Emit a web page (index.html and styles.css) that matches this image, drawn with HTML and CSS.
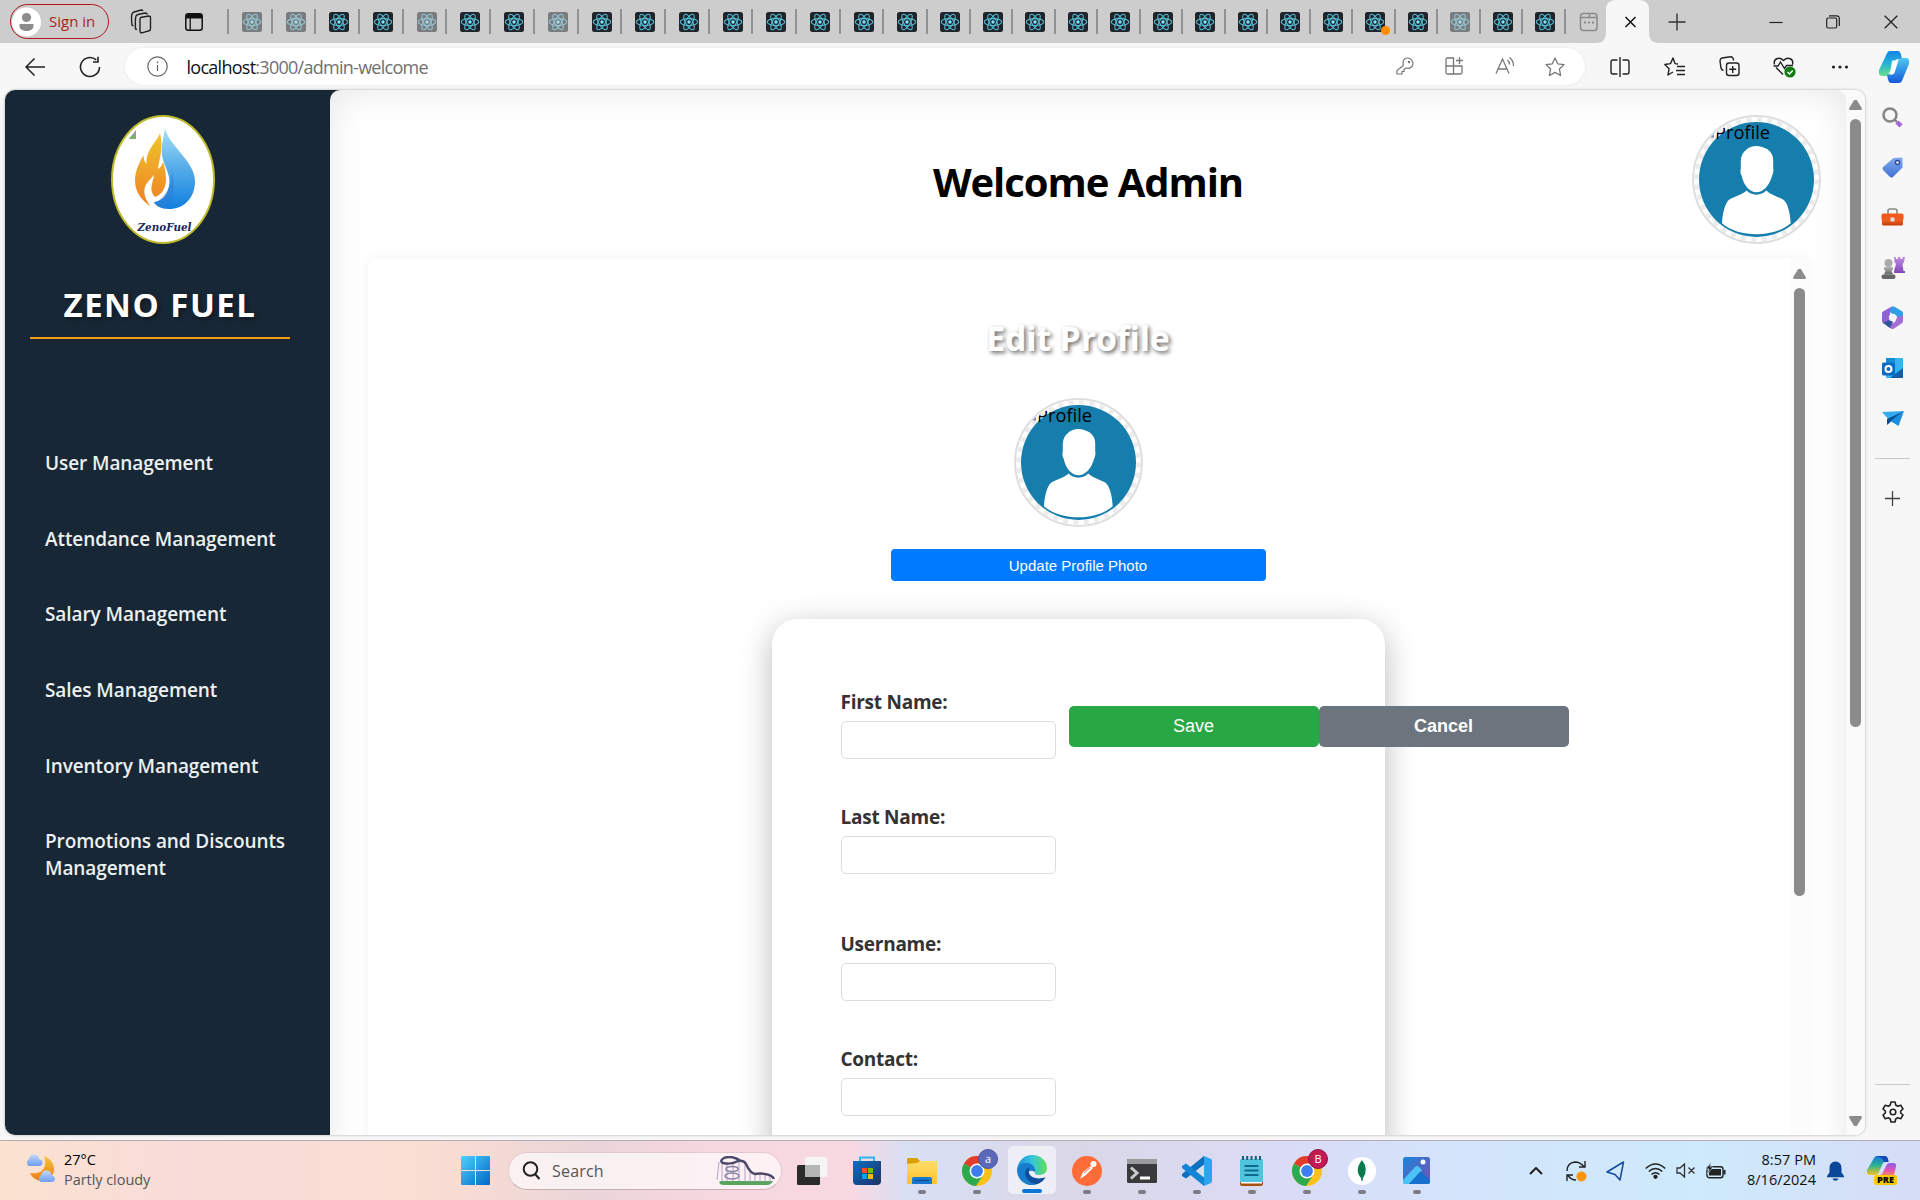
FILE: index.html
```html
<!DOCTYPE html>
<html lang="en">
<head>
<meta charset="utf-8">
<title>Admin</title>
<link rel="stylesheet" href="styles.css">
</head>
<body>
<svg class="defs" width="0" height="0">
  <defs>
    <linearGradient id="gBlue" x1="0" y1="0" x2="0" y2="1"><stop offset="0" stop-color="#a5e0f8"/><stop offset=".5" stop-color="#55abe9"/><stop offset="1" stop-color="#117fe0"/></linearGradient>
    <linearGradient id="gFlame" x1="0" y1="0" x2="0" y2="1"><stop offset="0" stop-color="#eec52b"/><stop offset="1" stop-color="#f08125"/></linearGradient>
    <linearGradient id="gWin" x1="0" y1="0" x2="1" y2="1"><stop offset="0" stop-color="#4fd0fb"/><stop offset="1" stop-color="#0067c8"/></linearGradient>
    <linearGradient id="gCop1" x1="0" y1="0" x2="0" y2="1"><stop offset="0" stop-color="#1782e8"/><stop offset=".5" stop-color="#22b4d4"/><stop offset="1" stop-color="#6bdc8b"/></linearGradient>
    <linearGradient id="gCop2" x1="0" y1="0" x2="0" y2="1"><stop offset="0" stop-color="#4cc9f5"/><stop offset="1" stop-color="#1559d8"/></linearGradient>
    <linearGradient id="gPre1" x1="0" y1="0" x2="0" y2="1"><stop offset="0" stop-color="#1578e0"/><stop offset=".5" stop-color="#2cb38f"/><stop offset="1" stop-color="#fbc21a"/></linearGradient>
    <linearGradient id="gPre2" x1="0" y1="0" x2="0" y2="1"><stop offset="0" stop-color="#8f5df0"/><stop offset=".6" stop-color="#e154b8"/><stop offset="1" stop-color="#f8845a"/></linearGradient>
    <linearGradient id="gPurple" x1="0" y1="0" x2="0" y2="1"><stop offset="0" stop-color="#c08be8"/><stop offset="1" stop-color="#8248b8"/></linearGradient>
    <linearGradient id="gGray" x1="0" y1="0" x2="0" y2="1"><stop offset="0" stop-color="#b4b4b4"/><stop offset="1" stop-color="#666"/></linearGradient>
    <linearGradient id="gTag" x1="0" y1="0" x2="0" y2="1"><stop offset="0" stop-color="#7fabf0"/><stop offset="1" stop-color="#4470d4"/></linearGradient>
    <linearGradient id="gRed" x1="0" y1="0" x2="0" y2="1"><stop offset="0" stop-color="#f26522"/><stop offset="1" stop-color="#c93c08"/></linearGradient>
    <linearGradient id="gFold" x1="0" y1="0" x2="0" y2="1"><stop offset="0" stop-color="#ffdc6b"/><stop offset="1" stop-color="#fdc22c"/></linearGradient>
    <linearGradient id="gStore" x1="0" y1="0" x2="1" y2="1"><stop offset="0" stop-color="#0a6fc0"/><stop offset="1" stop-color="#1f2f62"/></linearGradient>
    <linearGradient id="gEdge" x1="0" y1="0" x2="1" y2="0"><stop offset="0" stop-color="#1c8fd8"/><stop offset=".5" stop-color="#33c4e0"/><stop offset="1" stop-color="#62df55"/></linearGradient>
    <linearGradient id="gMoon" x1="0" y1="0" x2="0" y2="1"><stop offset="0" stop-color="#f6c63c"/><stop offset="1" stop-color="#ee7a14"/></linearGradient>
    <linearGradient id="gCloud" x1="0" y1="0" x2="0" y2="1"><stop offset="0" stop-color="#c0d8fc"/><stop offset="1" stop-color="#6f9df0"/></linearGradient>
    <linearGradient id="gPhoto" x1="0" y1="0" x2="1" y2="1"><stop offset="0" stop-color="#1a86dc"/><stop offset="1" stop-color="#7a4fb0"/></linearGradient>
    <clipPath id="faceClip"><circle cx="65" cy="64.500" r="61.500"/></clipPath>
  </defs>
  <symbol id="atom" viewBox="0 0 20 20">
    <rect width="20" height="20" rx="2.500" fill="#20232a"/>
    <g fill="none" stroke="#56bfd9" stroke-width="1.050"><ellipse cx="10" cy="10" rx="8.800" ry="3.400"/><ellipse cx="10" cy="10" rx="8.800" ry="3.400" transform="rotate(60 10 10)"/><ellipse cx="10" cy="10" rx="8.800" ry="3.400" transform="rotate(120 10 10)"/></g>
    <circle cx="10" cy="10" r="1.700" fill="#7be6ff"/>
  </symbol>
  <symbol id="face" viewBox="0 0 129 129">
    <circle cx="64.500" cy="64.500" r="63.400" fill="#fff" stroke="#dedede" stroke-width="2"/>
    <circle cx="64.500" cy="64.500" r="60" fill="none" stroke="#ebebeb" stroke-width="4.500" stroke-dasharray="5 5.470"/>
    <circle cx="64.500" cy="64.500" r="57.500" fill="#167eac"/>
    <path fill="#fff" d="M64.500 31c7 .3 16.700 4 16.700 14V53c.5 2 .3 5-1.200 8C77.500 71 70.500 77.300 64.500 77.300S51.500 71 49.800 61c-1.500-2-1.700-5-1-7.500V46C49 37 56.500 31 64.500 31z"/>
    <path fill="#fff" d="M54.700 75.500c4 5.500 15.500 5.500 19.500 0 5 4.500 11.500 6 17 9 5 3.500 7 15 7.500 23.800C89.500 116 77.500 119.300 64.500 119.300S39 116 30 108.300C30.500 99 32.500 89 37 84.700c5.500-3.200 13-5 17.700-9.200z"/>
    <path d="M18.500 22.500l3.500-3.500v3.500z" fill="#888"/>
  </symbol>
  <symbol id="chrome" viewBox="0 0 30 30">
    <circle cx="15" cy="15" r="15" fill="#fbc116"/>
    <path d="M15 15L2 7.500A15 15 0 0 1 28 7.500H15z" fill="#e33b2e"/>
    <path d="M15 15L2 7.500A15 15 0 0 0 14 30l7.500-11.500z" fill="#2da94f"/>
    <circle cx="15" cy="15" r="7.500" fill="#fff"/><circle cx="15" cy="15" r="5.900" fill="#3e7eee"/>
  </symbol>
</svg>

<div class="screen">
  <header class="tabstrip">
    <div class="signin">
      <svg width="29" height="30" viewBox="0 0 29 30"><circle cx="14.500" cy="15" r="14.500" fill="#fff"/><circle cx="14.500" cy="10.500" r="4.600" fill="#8c8c8c"/><path d="M7.500 17h14c.500 5-2.500 7-7 7s-7.500-2-7-7z" fill="#8c8c8c"/></svg>
      <span class="signin-text">Sign in</span>
    </div>
    <svg class="ico-work" width="22" height="25" viewBox="0 0 22 25" fill="none" stroke="#222" stroke-width="1.400"><path d="M10.500 8.500l8-1.500q2 0 2 1.500v11q0 2-1.500 2.300l-7 2q-2 .2-2-2v-11q0-2 .5-2.300z"/><path d="M7 20.500l-1.500-.5q-.5-10 .5-13 .5-1 2-1.500L15 4q2 0 2.500 1.500M3.500 17L2 16Q1 8 2 5q.5-1.500 2-2l7-2q1.500 0 2 1"/></svg>
    <svg class="ico-vert" width="18" height="18" viewBox="0 0 18 18"><rect x=".8" y=".8" width="16.400" height="16.400" rx="2.500" fill="none" stroke="#111" stroke-width="1.500"/><path d="M1 5.500V3q0-2 2-2h12q2 0 2 2v2.500z" fill="#111"/><path d="M5.200 5v12" stroke="#111" stroke-width="1.300"/></svg>
    <div class="tabs">
      <div class="tab idle"><svg><use href="#atom"/></svg></div>
      <div class="tab idle"><svg><use href="#atom"/></svg></div>
      <div class="tab"><svg><use href="#atom"/></svg></div>
      <div class="tab"><svg><use href="#atom"/></svg></div>
      <div class="tab idle"><svg><use href="#atom"/></svg></div>
      <div class="tab"><svg><use href="#atom"/></svg></div>
      <div class="tab"><svg><use href="#atom"/></svg></div>
      <div class="tab idle"><svg><use href="#atom"/></svg></div>
      <div class="tab"><svg><use href="#atom"/></svg></div>
      <div class="tab"><svg><use href="#atom"/></svg></div>
      <div class="tab"><svg><use href="#atom"/></svg></div>
      <div class="tab"><svg><use href="#atom"/></svg></div>
      <div class="tab"><svg><use href="#atom"/></svg></div>
      <div class="tab"><svg><use href="#atom"/></svg></div>
      <div class="tab"><svg><use href="#atom"/></svg></div>
      <div class="tab"><svg><use href="#atom"/></svg></div>
      <div class="tab slim"><svg><use href="#atom"/></svg></div>
      <div class="tab slim"><svg><use href="#atom"/></svg></div>
      <div class="tab slim"><svg><use href="#atom"/></svg></div>
      <div class="tab slim"><svg><use href="#atom"/></svg></div>
      <div class="tab slim"><svg><use href="#atom"/></svg></div>
      <div class="tab slim"><svg><use href="#atom"/></svg></div>
      <div class="tab slim"><svg><use href="#atom"/></svg></div>
      <div class="tab slim"><svg><use href="#atom"/></svg></div>
      <div class="tab slim"><svg><use href="#atom"/></svg></div>
      <div class="tab slim"><svg><use href="#atom"/></svg></div>
      <div class="tab slim alert"><svg><use href="#atom"/></svg></div>
      <div class="tab slim"><svg><use href="#atom"/></svg></div>
      <div class="tab slim idle"><svg><use href="#atom"/></svg></div>
      <div class="tab slim"><svg><use href="#atom"/></svg></div>
      <div class="tab slim"><svg><use href="#atom"/></svg></div>
      <div class="tab last"><svg viewBox="0 0 20 20" fill="none" stroke="#8a8a8a" stroke-width="1.500"><rect x="1.500" y="1.500" width="16.500" height="17" rx="3"/><path d="M2 5.500h8.500V2M10.500 5.500H18"/><path d="M5 10.500h2M9 10.500h2M13 10.500h2" stroke-width="2"/></svg></div>
    </div>
    <svg class="tab-active" width="64" height="43" viewBox="0 0 64 43"><path d="M0 43Q10 43 10 33V10Q10 0 20 0H43Q53 0 53 10V33Q53 43 63 43z" fill="#f7f7f7"/><path d="M29.500 17l10 10m0-10l-10 10" stroke="#111" stroke-width="1.500"/></svg>
    <svg class="ico-newtab" width="18" height="18" viewBox="0 0 18 18"><path d="M9 .5v17M.5 9h17" stroke="#333" stroke-width="1.400"/></svg>
    <div class="winctl"><svg width="14" height="14"><path d="M.5 7.500h13" stroke="#222" stroke-width="1.200"/></svg></div>
    <div class="winctl"><svg width="14" height="14" viewBox="0 0 14 14" fill="none" stroke="#222" stroke-width="1.200"><rect x=".7" y="3" width="10" height="10" rx="1.500"/><path d="M3 .8h7.500q2.800 0 2.800 2.800V11"/></svg></div>
    <div class="winctl"><svg width="14" height="14"><path d="M.7.7l12.600 12.600M13.300.7L.7 13.300" stroke="#222" stroke-width="1.300"/></svg></div>
  </header>

  <div class="toolbar">
    <div class="nav-back"><svg width="20" height="18" viewBox="0 0 20 18" fill="none" stroke="#222" stroke-width="1.500"><path d="M20 9H1M9.500.5L1 9l8.500 8.500"/></svg></div>
    <div class="nav-reload"><svg width="22" height="22" viewBox="0 0 22 22" fill="none" stroke="#222" stroke-width="1.600"><path d="M20.500 11a9.500 9.500 0 1 1-3.300-7.200"/><path d="M14 6h5V.8"/></svg></div>
    <div class="address">
      <svg width="21" height="21" viewBox="0 0 21 21" fill="none" stroke="#666" stroke-width="1.200"><circle cx="10.500" cy="10.500" r="9.700"/><path d="M10.500 9v6M10.500 5.500v1.800"/></svg>
      <span class="url"><b>localhost</b>:3000/admin-welcome</span>
      <div class="addr-icons">
        <div class="addr-ico"><svg width="18" height="18" viewBox="0 0 18 18" fill="none" stroke="#777" stroke-width="1.200"><path d="M7.300 8.500C6 4 8 1 11.500 1S17 4 17 6.500s-2.500 6-7 4.500l-2 1.500v2H6V17H1v-3.500z"/><circle cx="13" cy="5" r=".7"/></svg></div>
        <div class="addr-ico"><svg width="20" height="18" viewBox="0 0 20 18" fill="none" stroke="#777" stroke-width="1.300"><path d="M8.500 17V1H2.500Q1 1 1 2.500v13Q1 17 2.500 17h13q1.500 0 1.500-1.500V9H1M14.500 0v7M11 3.500h7"/></svg></div>
        <div class="addr-ico"><svg width="20" height="18" viewBox="0 0 20 18" fill="none" stroke="#777" stroke-width="1.300"><path d="M1 16.500L7.500 2 14 16.500M3.200 12h8.600M12.500 3q2 1.500 2 4.500M14.500.5q4 3 4 8.500"/></svg></div>
        <div class="addr-ico"><svg width="20" height="20" viewBox="0 0 20 20" fill="none" stroke="#777" stroke-width="1.300" stroke-linejoin="round"><path d="M10 1l2.700 5.800 6.300.8-4.600 4.400 1.200 6.500L10 15.400 4.400 18.500l1.200-6.500L1 7.600l6.300-.8z"/></svg></div>
      </div>
    </div>
    <div class="tools">
      <div class="tool"><svg width="20" height="20" viewBox="0 0 20 20" fill="none" stroke="#222" stroke-width="1.400"><path d="M10 0v20M7.500 3H3Q1 3 1 5v10q0 2 2 2h4.500M12.500 3H17q2 0 2 2v10q0 2-2 2h-4.500"/></svg></div>
      <div class="tool"><svg width="21" height="20" viewBox="0 0 21 20" fill="none" stroke="#222" stroke-width="1.400" stroke-linejoin="round"><path d="M14 7l-3-.4L9 1 6.500 6.600.8 7.500l4.300 4.200L4 18l5-3M13 9.500h8M12 13.500h9M13 17.500h8"/></svg></div>
      <div class="tool"><svg width="21" height="21" viewBox="0 0 21 21" fill="none" stroke="#222" stroke-width="1.400"><rect x="7.500" y="7" width="12.500" height="12.500" rx="2.500"/><path d="M13.700 10v7M10.200 13.300h7M4.500 14.500q-2-.5-2.500-2.500L1 5q0-2.500 2-3l8.500-1.200Q14 .7 14.700 4.500"/></svg></div>
      <div class="tool"><svg width="23" height="22" viewBox="0 0 23 22" fill="none" stroke="#222" stroke-width="1.400"><path d="M1.500 8.500C0 3 6 0 10.500 4.500 15 0 21 3 19.500 8.500M3 11.500l7 7M.5 10H5l2.500-4 4 6.500 2-3H20"/><circle cx="17" cy="16" r="5.600" fill="#107c10" stroke="none"/><path d="M14.500 16l2 2 3.200-3.500" stroke="#fff"/></svg></div>
      <div class="tool"><svg width="18" height="4" viewBox="0 0 18 4" fill="#222"><circle cx="2.500" cy="2" r="1.600"/><circle cx="9" cy="2" r="1.600"/><circle cx="15.500" cy="2" r="1.600"/></svg></div>
      <div class="tool"><svg width="31" height="32" viewBox="0 0 31 27" preserveAspectRatio="none"><path d="M8 2q1-2 3-2h8q2 0 3 3l1 4h-5q-2 0-3 3l-3 8q-1 3-4 3H3q-4 0-3-5z" fill="url(#gCop1)"/><path d="M23 25q-1 2-3 2h-8q-2 0-3-3l-1-4h4q3 0 4-3l3-8q1-3 4-3h4q4 0 3 5z" fill="url(#gCop2)"/><path d="M13 8h6l-4 11h-6q2-1 2.500-3z" fill="#fff" opacity=".9"/></svg></div>
    </div>
  </div>

  <div class="workspace">
    <div class="viewport">
      <aside class="sidebar">
        <svg class="logo" width="104" height="129" viewBox="0 0 104 129">
          <ellipse cx="52" cy="64.500" rx="51" ry="63.500" fill="#fff" stroke="#bfb92c" stroke-width="2"/>
          <path d="M18 24l7-9v9z" fill="#9a9a9a"/><path d="M18 23.500l4-4 2 4z" fill="#6cc04a"/>
          <path d="M54 13C57 30 84 46 84 66c0 18-12 28-26 28-8 0-13-3-15-7 8-1 12-6 14-12 5-14-4-22-6-35-1-11 2-18 3-27z" fill="url(#gBlue)"/>
          <path d="M60 52c3 16-6 32-17 36 3 4 8 5.500 12 5.500 10-11 9-26 5-41.500z" fill="#2f79d0" opacity=".45"/>
          <path d="M49 18c-3 9-14 16-13.500 31-2-2-3-5-3-9C27 50 24 57 24 66c0 11 7 20 15.500 25C32 82 32 74 36 68c2-3 5-5 7-8-1 8-6 15 1 22 8-3 10-9 11-16 0-7-1-14-3-19-1 3-2 5-5 7 1-10 6-20 2-36z" fill="url(#gFlame)"/>
          <text x="26.500" y="116" font-family="DejaVu Serif, serif" font-weight="bold" font-style="italic" font-size="10.500" fill="#1b2460" textLength="54" lengthAdjust="spacingAndGlyphs">ZenoFuel</text>
        </svg>
        <h2 class="brand">ZENO FUEL</h2>
        <nav class="menu">
          <a>User Management</a>
          <a>Attendance Management</a>
          <a>Salary Management</a>
          <a>Sales Management</a>
          <a>Inventory Management</a>
          <a>Promotions and Discounts Management</a>
        </nav>
      </aside>
      <main class="main">
        <div class="head">
          <h1>Welcome Admin</h1>
          <svg class="avatar" viewBox="0 0 129 129"><use href="#face"/><text class="alt" x="23" y="23.500" clip-path="url(#faceClip)" textLength="55" lengthAdjust="spacingAndGlyphs">Profile</text></svg>
        </div>
        <section class="panel">
          <div class="profile">
            <h2 class="title">Edit Profile</h2>
            <svg class="avatar" viewBox="0 0 129 129"><use href="#face"/><text class="alt" x="23" y="23.500" clip-path="url(#faceClip)" textLength="55" lengthAdjust="spacingAndGlyphs">Profile</text></svg>
            <button class="upload">Update Profile Photo</button>
            <form class="card">
              <div class="fields">
                <div class="field"><label>First Name:</label><input type="text"></div>
                <div class="field"><label>Last Name:</label><input type="text"></div>
                <div class="field apart"><label>Username:</label><input type="text"></div>
                <div class="field"><label>Contact:</label><input type="text"></div>
              </div>
              <div class="actions">
                <button type="button" class="save">Save</button>
                <button type="button" class="cancel">Cancel</button>
              </div>
            </form>
          </div>
          <div class="scroll"><i class="up"></i><i class="thumb"></i></div>
        </section>
      </main>
      <div class="scroll outer"><i class="up"></i><i class="thumb"></i><i class="down"></i></div>
    </div>

    <aside class="rail">
      <div class="rail-ico"><svg width="21" height="21" viewBox="0 0 21 21" fill="none"><circle cx="8" cy="8" r="6.500" stroke="#868686" stroke-width="2.500"/><path d="M13 13l2 2" stroke="#777" stroke-width="2"/><path d="M15 15l4 4" stroke="#a466d0" stroke-width="4.500"/></svg></div>
      <div class="rail-ico"><svg width="21" height="21" viewBox="0 0 21 21"><path d="M11.500 1L19 .5q1.500 0 1.500 1.500v8.500L11 20q-1.500 1-3 0L1 13q-1-1.500 0-3z" fill="url(#gTag)"/><circle cx="15.500" cy="5.500" r="2" fill="#fff" stroke="#2c4a95" stroke-width="1.400"/></svg></div>
      <div class="rail-ico"><svg width="23" height="19" viewBox="0 0 23 19"><path d="M7 6V3q0-2 2-2h5q2 0 2 2v3" fill="none" stroke="#888" stroke-width="1.600"/><rect x=".5" y="5.500" width="22" height="7" rx="1.500" fill="#f15a1c"/><path d="M1 11.500h21V16q0 1.500-1.500 1.500h-18Q1 17.500 1 16z" fill="url(#gRed)"/><rect x="9.500" y="9.500" width="4" height="4" fill="#ddd"/></svg></div>
      <div class="rail-ico"><svg width="24" height="24" viewBox="0 0 24 24"><path d="M13 1h2v2h2V1h2.500v2h2V1H24l-1 5-1.500 2L22.500 15H24v2H13v-2l2-7-1.500-2z" fill="url(#gPurple)"/><circle cx="7.500" cy="7" r="4" fill="#aaa"/><path d="M3 11h9v2.500l-1.500 1 1.500 4H3l1.500-4-1.500-1z" fill="url(#gGray)"/><rect x=".5" y="18.500" width="14" height="4.500" rx="2" fill="#666"/></svg></div>
      <div class="rail-ico"><svg width="21" height="23" viewBox="0 0 21 23"><path d="M8.500 1.200Q10.500 0 12 1L14 2.500 8 6v8l-6.500 3.500Q0 16.500 0 15V7.500q0-1.500 1-2z" fill="#8f63d8"/><path d="M10.500.5Q12 .2 13 1l7 4.300q1 .7 1 2V14l-7-4L7.500 6 9 1.500z" fill="#2f9ee8"/><path d="M21 9.500V15q0 1.500-1.500 2.500l-7.500 5q-1.500 1-3 0L5 20l8-4 2-5z" fill="#a56bd6"/><path d="M1 17l6-3 4 1.500L8 22z" fill="#35519f"/><circle cx="10.700" cy="11.500" r="3.800" fill="#f7f7f7"/></svg></div>
      <div class="rail-ico"><svg width="21" height="21" viewBox="0 0 21 21"><rect x="4" width="17" height="20" rx="1" fill="#33b4ee"/><path d="M4 0h9v7H4z" fill="#178fd5"/><path d="M21 10v10H8z" fill="#155ea8"/><rect y="4.500" width="13" height="13" rx="1.500" fill="#0a6bc5"/><circle cx="6.500" cy="11" r="3" fill="none" stroke="#fff" stroke-width="2"/></svg></div>
      <div class="rail-ico"><svg width="22" height="17" viewBox="0 0 22 17"><path d="M0 2l22-1L7 10z" fill="#32aef0"/><path d="M22 1L5 9v6z" fill="#0b4f94"/><path d="M22 1l-5.500 15-8-5z" fill="#1b8fdf"/></svg></div>
      <hr class="rail-line">
      <div class="rail-add"><svg width="15" height="15"><path d="M7.500 0v15M0 7.500h15" stroke="#444" stroke-width="1.300"/></svg></div>
      <hr class="rail-line low">
      <div class="rail-gear"><svg width="22" height="22" viewBox="0 0 22 22" fill="none" stroke="#222" stroke-width="1.600" stroke-linejoin="round"><path d="M9 1h4l.7 3 2 1.200 3-1L21 8l-2.300 2v2L21 14l-2.300 3.800-3-1-2 1.200-.7 3H9l-.7-3-2-1.200-3 1L1 14l2.300-2v-2L1 8l2.300-3.800 3 1 2-1.200z"/><circle cx="11" cy="11" r="2.800"/></svg></div>
    </aside>
  </div>

  <footer class="taskbar">
    <div class="weather">
      <svg width="30" height="30" viewBox="0 0 30 30"><path d="M19 2c10 4 13 14 7 21-6 6-17 5-21-4 12 2 18-6 14-17z" fill="url(#gMoon)"/><path d="M4 12a4 4 0 0 1 0-7q1-5 5.500-4.500T14 5q4 1 3.500 4T14 12z" fill="url(#gCloud)"/><path d="M16 28a4 4 0 0 1 0-7q1-4.500 5.500-4.500T26.500 21q3.500 1 3.500 4t-4 3z" fill="url(#gCloud)"/></svg>
      <div class="weather-text"><span class="temp">27°C</span><span class="sky">Partly cloudy</span></div>
    </div>
    <svg class="start" width="29" height="29" viewBox="0 0 29 29"><path fill="url(#gWin)" d="M1 0h13v14H0V1q0-1 1-1zM15 0h13q1 0 1 1v13H15zM0 15h14v14H1q-1 0-1-1zM15 15h14v13q0 1-1 1H15z"/></svg>
    <div class="search">
      <svg width="19" height="19" viewBox="0 0 19 19" fill="none" stroke="#222" stroke-width="2"><circle cx="8.500" cy="8" r="6.800"/><path d="M13 13l4.500 5"/></svg>
      <span class="search-text">Search</span>
      <svg class="coaster" width="60" height="30" viewBox="0 0 60 30" fill="none"><path d="M4 28Q2 25 6 25h46q5 0 5 0-2 4-6 4H9q-4 0-5-1z" fill="#58a45c"/><path d="M6 4v21M11 6v19M17 5v20M23 5v20M29 8v18M34 14v12M39 18v8M44 19v7M49 19v7M54 20v6M3 6L1 24" stroke="#a99ac2" stroke-width=".9"/><path d="M25 5Q16-1 8 2 3 5 7 7q8 2 15-2 6-1 8 3 4 9 9 10 5-1 10 0 7 1 9 5" stroke="#4b4868" stroke-width="2.400"/><ellipse cx="16" cy="13" rx="6" ry="2.500" stroke="#8a86a6" stroke-width="1.600"/><ellipse cx="16" cy="20" rx="7" ry="3" stroke="#8a86a6" stroke-width="1.600"/></svg>
    </div>
    <div class="apps">
      <div class="app"><svg width="30" height="30" viewBox="0 0 30 30"><rect x="0" y="9" width="23" height="20" rx="1.500" fill="#2b2b2b"/><rect x="8" y="1" width="22" height="20" rx="1.500" fill="#f5f5f5"/><path d="M8 9h15v12H9.500Q8 21 8 19.500z" fill="#b5b5b5"/></svg></div>
      <div class="app"><svg width="30" height="30" viewBox="0 0 30 30"><path d="M8 6V1.500h14V6" fill="none" stroke="#2bb5f2" stroke-width="2"/><path d="M1 5h28v20q0 4-4 4H5q-4 0-4-4z" fill="url(#gStore)"/><path d="M10 12h5v5h-5z" fill="#f25022"/><path d="M16 12h5v5h-5z" fill="#7fba00"/><path d="M10 18h5v5h-5z" fill="#00a4ef"/><path d="M16 18h5v5h-5z" fill="#ffb900"/></svg></div>
      <div class="app run"><svg width="30" height="28" viewBox="0 0 30 28"><path d="M0 2Q0 1 1 1h9l3 3h16q1 0 1 1v4H0z" fill="#dca007"/><path d="M0 7l10-1 3-2h16q1 0 1 1v21q0 1-1 1H1q-1 0-1-1z" fill="url(#gFold)"/><path d="M5 27v-5q0-2 2-2h16q2 0 2 2v5z" fill="#1779d2"/><path d="M8 23.500h14" stroke="#0c4f96" stroke-width="1.500"/></svg></div>
      <div class="app run"><svg width="30" height="30"><use href="#chrome"/></svg><span class="badge">a</span></div>
      <div class="app run current"><svg width="30" height="30" viewBox="0 0 30 30"><path d="M15 0c9 0 15 6 15 13 0 5-4 7-8 7-3 0-5-1-4-3 1-5-3-8-8-8-6 0-9 4-10 6C1 6 7 0 15 0z" fill="url(#gEdge)"/><path d="M0 15C1 10 5 7.500 10 8c5 0 9 4 8 9-5-3-9 0-8 5 1 3 4 6 9 8C9 32 0 25 0 15z" fill="#167ccc"/><path d="M12 12c-8 5-2 16 7 17.500 4-1 8-4 9.500-7.500-7 3-15 1-16.500-4z" fill="#0d4f9c"/></svg></div>
      <div class="app run"><svg width="30" height="30" viewBox="0 0 30 30"><circle cx="15" cy="15" r="15" fill="#ff6c37"/><path d="M8 23l3-7 8-6 2 2-7 7z" fill="#fff"/><circle cx="21.500" cy="8" r="3" fill="#fff"/><path d="M12 17l6-5" stroke="#ff6c37"/></svg></div>
      <div class="app run"><svg width="30" height="24" viewBox="0 0 30 24"><rect width="30" height="24" rx="1.500" fill="#3a3a3c"/><path d="M0 5V1.500Q0 0 1.500 0h27Q30 0 30 1.500V5z" fill="#9b9b9d"/><path d="M4 8.500l6 5.500-6 5.500" fill="none" stroke="#ccc" stroke-width="3"/><path d="M13 19h10" stroke="#fff" stroke-width="3"/></svg></div>
      <div class="app run"><svg width="30" height="30" viewBox="0 0 30 30"><path d="M22 0l7 3q1 .5 1 2v20q0 1.500-1 2l-7 3z" fill="#2ba6ee"/><path d="M22 0v8.500L4 22.500 0 20v-2z" fill="#0a6fbd"/><path d="M22 30v-8.500L4 7.500 0 10v2z" fill="#1485d4"/></svg></div>
      <div class="app run"><svg width="23" height="30" viewBox="0 0 23 30"><rect y="3" width="23" height="25" rx="1.500" fill="#50c3dd"/><path d="M0 26h23v2q0 2-2 2H2q-2 0-2-2z" fill="#a8500f"/><path d="M1 26h21v1.500H1z" fill="#fff"/><path d="M4.500 10h14M4.500 14.500h14M4.500 19h14" stroke="#0d6b8c" stroke-width="1.800"/><path d="M3 0v4M7.200 0v4M11.500 0v4M15.800 0v4M20 0v4" stroke="#15607c" stroke-width="2"/></svg></div>
      <div class="app run"><svg width="30" height="30"><use href="#chrome"/></svg><span class="badge rose">B</span></div>
      <div class="app run"><svg width="28" height="28" viewBox="0 0 28 28"><circle cx="14" cy="14" r="14" fill="#fff"/><path d="M14 3q7 9 1 18l-.5 3h-1L13 21Q6 13 14 3z" fill="#0a7a4c"/></svg></div>
      <div class="app run"><svg width="27" height="27" viewBox="0 0 27 27"><rect width="27" height="27" rx="2.500" fill="url(#gPhoto)"/><path d="M0 23L12 10q2-2 4 0l3 3L6 27H2.500Q0 27 0 24.500z" fill="#4cc3f5"/><path d="M6 27l10-11q2-2 4 0l7 7v1.500q0 2.500-2.500 2.500z" fill="#1671ce"/><circle cx="20" cy="5" r="2.500" fill="#fff"/></svg></div>
    </div>
    <div class="tray">
      <svg class="t-chev" width="14" height="8" viewBox="0 0 14 8" fill="none" stroke="#222" stroke-width="2"><path d="M1 7l6-6 6 6"/></svg>
      <svg class="t-sync" width="21" height="22" viewBox="0 0 21 22" fill="none" stroke="#222" stroke-width="1.400"><path d="M1 11Q1 3 9 2q5 0 9 4.500M19 1v6h-6M1 21v-6h6M2 15.500Q5 20 10 20"/><circle cx="15.500" cy="16.500" r="5" fill="#ff950a" stroke="none"/></svg>
      <svg class="t-nav" width="19" height="20" viewBox="0 0 19 20" fill="none" stroke="#114a9c" stroke-width="1.500" stroke-linejoin="round"><path d="M17.500 1L1 11l8 2.500 5 5.500z"/></svg>
      <svg class="t-wifi" width="21" height="16" viewBox="0 0 21 16" fill="none" stroke="#222" stroke-width="1.500"><path d="M.7 5.500Q10.500-3.500 20.300 5.500M3.700 8.500q6.800-6 13.600 0M6.500 11.500q4-3.600 8 0"/><circle cx="10.500" cy="13.800" r="1.400" fill="#222"/></svg>
      <svg class="t-mute" width="20" height="15" viewBox="0 0 20 15" fill="none" stroke="#333" stroke-width="1.300"><path d="M1 5v5h3l4.500 4V1L4 5zM12.500 4.500l6 6m0-6l-6 6"/></svg>
      <svg class="t-batt" width="20" height="17" viewBox="0 0 20 17"><rect x="1" y="4.700" width="16" height="11" rx="2.500" fill="none" stroke="#222" stroke-width="1.400"/><path d="M3 7h12v6.500H3zM17.500 8h2v4.500h-2z" fill="#222"/><path d="M5 0L0 7h3l-1.500 5L7 5H4z" fill="#222" stroke="#cfe6fb" stroke-width=".6"/></svg>
      <div class="clock"><span>8:57 PM</span><span>8/16/2024</span></div>
      <svg class="t-bell" width="17" height="20" viewBox="0 0 17 20" fill="#0a4799"><path d="M8.500.5Q14.500 1 14.500 7v4.500L17 15v1.200H0V15l2.500-3.500V7q0-6 6-6.500zM5.500 17.500h6q-.5 2.300-3 2.300t-3-2.300z"/></svg>
      <svg class="t-pre" width="30" height="29" viewBox="0 0 30 29"><path d="M7 2q1-2 3-2h8q2 0 3 3l.5 3H18q-2 0-3 3l-3 7q-1 3-4 3H3q-4 0-3-5z" fill="url(#gPre1)"/><path d="M8 0h10q2 0 3 3l.5 3H17Q16 1 8 0z" fill="#1749b8"/><path d="M12 19q3 0 4-3l3-6q1-3 4-3h3q4 0 3 4l-2 8z" fill="url(#gPre2)"/><rect x="7" y="19" width="23" height="10" rx="2" fill="#fdc808"/><text x="10" y="27" font-family="Open Sans, sans-serif" font-weight="800" font-size="8.500" textLength="17" lengthAdjust="spacingAndGlyphs">PRE</text></svg>
    </div>
  </footer>
</div>
</body>
</html>
```
FILE: styles.css
```css
* { box-sizing: border-box; }
body { margin: 0; font-family: "Open Sans", "Noto Sans", sans-serif; color: #000; }
h1, h2 { margin: 0; }
svg { flex: none; display: block; }
button { border: 0; font-family: "Liberation Sans", Arial, sans-serif; color: #fff; padding: 0; }
.defs { position: absolute; }
.screen { width: 1920px; height: 1200px; overflow: hidden; display: flex; flex-direction: column; background: #f7f7f7; }

/* tab strip */
.tabstrip { height: 43px; flex: none; background: #cdcdcd; display: flex; align-items: center; padding-left: 10px; }
.signin { width: 99px; height: 35px; border: 1.5px solid #b3161b; border-radius: 18px; display: flex; align-items: center; padding-left: 1px; gap: 8px; flex: none; }
.signin-text { color: #a81e22; font-size: 15px; line-height: 20px; letter-spacing: 0; white-space: nowrap; margin-top: -2px; }
.ico-work { margin-left: 21px; }
.ico-vert { margin-left: 33px; }
.tabs { display: flex; margin-left: 24px; width: 1369px; flex: none; }
.tab { width: 43.7px; height: 25px; border-left: 2px solid #929292; padding: 2.5px 0 0 13px; flex: none; position: relative; }
.tab svg { width: 20px; height: 20px; }
.tab.slim { width: 42.5px; padding-left: 12px; }
.tab.idle svg { opacity: .48; }
.tab.alert::after { content: ""; position: absolute; left: 28px; top: 17px; width: 9px; height: 9px; border-radius: 50%; background: #ff8c00; }
.ico-newtab { margin-left: 8px; }
.winctl { width: 57.5px; display: flex; justify-content: center; flex: none; }
.ico-newtab + .winctl { margin-left: 61px; }

/* toolbar */
.toolbar { height: 46px; flex: none; display: flex; align-items: center; padding-top: 1px; }
.nav-back { padding-left: 25px; width: 79px; flex: none; }
.nav-reload { width: 46px; flex: none; }
.address { width: 1460px; height: 37px; border-radius: 19px; background: #fff; display: flex; align-items: center; padding: 0 5px 0 22px; box-shadow: 0 0 3px rgba(0,0,0,.08); flex: none; }
.url { font-size: 18px; color: #707070; margin-left: 18.5px; flex: 1; letter-spacing: -0.73px; }
.url b { font-weight: 400; color: #111; }
.addr-icons { display: flex; }
.addr-ico { width: 50px; display: flex; justify-content: center; }
.tools { display: flex; margin-left: 7px; flex: none; }
.tool { width: 55px; display: flex; justify-content: center; align-items: center; }

/* page */
.workspace { display: flex; height: 1051px; flex: none; padding: 1px 0 5px 5px; }
.viewport { width: 1860px; height: 1045px; border-radius: 10px; overflow: hidden; display: flex; background: linear-gradient(90deg, #182735 50%, #fafafa 50%); box-shadow: 0 0 3px rgba(0,0,0,.3); }
.sidebar { width: 325px; flex: none; padding: 25px 40px 0 25px; display: flex; flex-direction: column; }
.logo { margin-left: 81px; }
.brand { margin-top: 39px; height: 56px; padding-bottom: 10px; border-bottom: 2px solid #f39c12; color: #fff; font-size: 33px; line-height: 44px; font-weight: 700; text-align: center; letter-spacing: 1.5px; text-shadow: 2px 2px 4px rgba(0,0,0,.4); white-space: nowrap; }
.menu { margin-top: 111px; margin-left: 15px; display: flex; flex-direction: column; gap: 48.7px; margin-right: -10px; }
.menu a { color: #ecf0f1; font-size: 19px; line-height: 27px; font-weight: 600; letter-spacing: -0.09px; }
.main { width: 1516px; height: 1120px; flex: none; background: #fff; border-top-left-radius: 10px; border-top-right-radius: 10px; box-shadow: inset 0 0 36px rgba(0,0,0,.1); display: flex; flex-direction: column; }
.head { height: 168px; flex: none; display: grid; grid-template-columns: 1fr auto 1fr; align-items: center; padding: 11px 25px 0; }
.head h1 { grid-column: 2; font-size: 40px; font-weight: 700; line-height: 54px; letter-spacing: -1.05px; margin-top: 4px; }
.head .avatar { justify-self: end; }
.avatar { width: 129px; height: 129px; }
.alt { font-size: 19px; }
.panel { margin: 0 37px 0 38px; flex: 1; display: flex; background: #fff; border-top-left-radius: 10px; box-shadow: 0 0 10px rgba(0,0,0,.06); min-height: 0; }
.profile { width: 1422px; display: flex; flex-direction: column; align-items: center; padding: 57px 2px 0 0; }
.title { color: #fff; font-size: 34px; line-height: 46px; font-weight: 700; text-shadow: 2px 2px 4px rgba(0,0,0,.6); letter-spacing: -0.25px; }
.profile .avatar { margin-top: 37px; }
.upload { width: 375px; height: 32px; margin-top: 22px; border-radius: 4px; background: #007bff; font-size: 15px; flex: none; }
.card { width: 613px; height: 700px; flex: none; margin-top: 38px; border-radius: 25px; background: #fff; box-shadow: 0 8px 32px rgba(0,0,0,.27); display: flex; padding: 71px 0 0 69px; gap: 13px; }
.fields { width: 215px; flex: none; display: flex; flex-direction: column; gap: 46px; }
.field { display: flex; flex-direction: column; gap: 5.5px; }
.field.apart { margin-top: 12px; }
.field label { font-size: 19px; line-height: 25.5px; font-weight: 700; color: #333; letter-spacing: -0.25px; }
.field input { height: 38px; border: 1px solid #ddd; border-radius: 5px; background: #fff; padding: 0; width: 215px; }
.actions { display: flex; margin-top: 16px; height: 41px; flex: none; }
.actions button { width: 250px; font-size: 18px; border-radius: 5px; }
.save { background: #28a745; }
.cancel { background: #6c757d; }
.actions .cancel { font-weight: 700; }
.scroll { width: 19px; flex: none; display: flex; flex-direction: column; align-items: center; padding-top: 11px; background: #fcfcfc; }
.scroll.outer { padding-top: 10px; background: #fafafa; }
.up, .down { width: 13px; height: 10px; background: #8b8b8b; clip-path: polygon(40% 0, 60% 0, 100% 85%, 95% 100%, 5% 100%, 0 85%); flex: none; }
.down { transform: scaleY(-1); margin-top: 389px; }
.thumb { width: 11px; height: 608px; border-radius: 6px; background: #8b8b8b; margin-top: 9px; flex: none; }

/* right rail */
.rail { width: 55px; display: flex; flex-direction: column; align-items: center; padding-top: 2px; }
.rail-ico { height: 50.2px; display: flex; align-items: center; justify-content: center; flex: none; }
.rail-line { width: 35px; height: 1px; border: 0; background: #c8c8c8; margin: 15px 0 0; flex: none; }
.rail-add { margin-top: 32px; }
.rail-line.low { margin-top: 578px; }
.rail-gear { margin-top: 16px; }

/* taskbar */
.taskbar { height: 60px; flex: none; border-top: 1px solid #b5abb4; display: flex; align-items: center; background: linear-gradient(90deg, #fae2d0 0, #f9dcd9 180px, #fbded3 420px, #ead5d8 590px, #f8d8e0 730px, #f8d8e1 850px, #d8e0f3 905px, #dad7e8 1080px, #dadcf6 1290px, #d3e4fb 1450px, #ceeafc 1700px, #d6def6 1900px); }
.weather { width: 461px; padding-left: 25px; display: flex; align-items: center; gap: 9px; flex: none; }
.weather svg { margin-top: -4px; }
.weather-text { display: flex; flex-direction: column; font-size: 14.5px; line-height: 20px; letter-spacing: -0.05px; margin-top: -2px; }
.sky { color: #555; }
.search { margin-left: 18px; width: 274px; height: 38px; border-radius: 19px; background: rgba(255,255,255,.65); border: 1px solid #e3c9cd; border-bottom-color: #c4aeb4; display: flex; align-items: center; padding: 0 5px 0 13px; flex: none; }
.search-text { margin-left: 11px; flex: 1; font-size: 16px; letter-spacing: 0.2px; color: #555; }
.apps { display: flex; margin-left: 2px; flex: none; }
.app { width: 55px; height: 59px; display: flex; align-items: center; justify-content: center; position: relative; }
.app.run::after { content: ""; position: absolute; left: 23.5px; top: 49px; width: 8px; height: 4px; border-radius: 2px; background: #7b7c87; }
.app.current { background: rgba(255,255,255,.55); width: 48px; height: 48px; margin: 5px 3.5px 0; border-radius: 5px; }
.app.current::after { left: 14px; top: 43px; width: 20px; background: #0975d4; }
.badge { position: absolute; left: 29px; top: 8px; width: 20px; height: 20px; border-radius: 50%; background: #5b69b9; color: #fff; font-size: 11px; line-height: 18px; text-align: center; border: 1px solid #49549b; }
.badge.rose { background: #c21a59; border-color: #8d1340; }
.tray { display: flex; align-items: center; margin-left: auto; padding-right: 24px; }
.t-sync { margin-left: 23px; }
.t-nav { margin-left: 19px; }
.t-wifi { margin-left: 20px; }
.t-mute { margin-left: 10px; }
.t-batt { margin-left: 10px; }
.clock { display: flex; flex-direction: column; align-items: flex-end; width: 90px; font-size: 14.5px; line-height: 20px; letter-spacing: 0.05px; color: #111; margin-top: -2px; }
.t-bell { margin-left: 11px; }
.t-pre { margin-left: 23px; margin-right: -1px; }
```
